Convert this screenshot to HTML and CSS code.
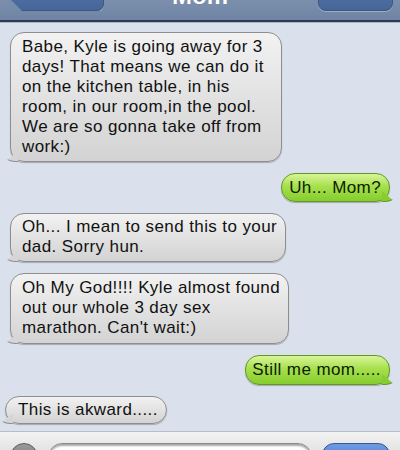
FILE: index.html
```html
<!DOCTYPE html>
<html>
<head>
<meta charset="utf-8">
<link rel="stylesheet" href="styles.css">
</head>
<body>
<div class="screen">
  <header class="topbar">
    <div class="btn back">Messages</div>
    <div class="title">Mom</div>
    <div class="btn edit">Edit</div>
  </header>
  <main class="chat">
    <div class="bubble in b1">Babe, Kyle is going away for 3<br>days! That means we can do it<br>on the kitchen table, in his<br>room, in our room,in the pool.<br>We are so gonna take off from<br>work:)</div>
    <div class="bubble out b2">Uh... Mom?</div>
    <div class="bubble in b3">Oh... I mean to send this to your<br>dad. Sorry hun.</div>
    <div class="bubble in b4">Oh My God!!!! Kyle almost found<br>out our whole 3 day sex<br>marathon. Can't wait:)</div>
    <div class="bubble out b5">Still me mom.....</div>
    <div class="bubble in b6">This is akward.....</div>
  </main>
  <footer class="bottombar">
    <div class="cam"></div>
    <div class="input"></div>
    <div class="send">Send</div>
  </footer>
</div>
</body>
</html>
```
FILE: styles.css
```css
* { box-sizing: border-box; }
html, body { margin: 0; padding: 0; }
body {
  width: 400px;
  height: 450px;
  overflow: hidden;
  background: #dbe1ec;
  font-family: "Liberation Sans", Arial, sans-serif;
}
.screen {
  width: 400px;
  height: 450px;
  display: flex;
  flex-direction: column;
  overflow: hidden;
}
.topbar {
  height: 22px;
  flex: none;
  display: flex;
  align-items: flex-end;
  justify-content: space-between;
  padding: 0 7px 9px 10px;
  background: linear-gradient(#7b8fad, #6f84a4);
  border-bottom: 2px solid #2d3a4e;
  box-shadow: 0 1px 0 #aab6c8;
  overflow: hidden;
  position: relative;
}
.btn {
  height: 30px;
  background: linear-gradient(#5576a8, #46669a);
  border: 1px solid #3e5580;
  border-radius: 0 0 8px 8px;
  color: #fff;
  font-weight: bold;
  font-size: 13px;
  display: flex;
  align-items: flex-end;
  justify-content: center;
  padding-bottom: 10px;
  box-shadow: 0 1px 0 rgba(255,255,255,0.3);
}
.back {
  width: 94px;
  clip-path: polygon(0 0, 100% 0, 100% 100%, 12px 100%, 0 60%);
  border-radius: 0 0 7px 0;
  padding-bottom: 2px;
  line-height: 10px;
  color: transparent;
}
.edit { width: 75px; color: transparent; }
.title {
  position: absolute;
  left: 0; right: 0;
  bottom: 13px;
  text-align: center;
  color: #fff;
  font-weight: bold;
  font-size: 24px;
  line-height: 22px;
  text-shadow: 0 -1px 0 #4a5a74;
}
.chat {
  flex: 1;
  display: flex;
  flex-direction: column;
  align-items: flex-start;
  padding: 10px 10px 0 10px;
  gap: 11px;
}
.bubble {
  position: relative;
  font-size: 17px;
  letter-spacing: 0.4px;
  line-height: 20px;
  color: #111;
  border-radius: 14px;
  padding: 3px 10px 4px 11px;
  box-shadow: 0 1px 1px rgba(0,0,0,0.25);
  white-space: nowrap;
}
.in {
  background: linear-gradient(#f2f2f2 0%, #e2e2e2 50%, #d3d3d3 100%);
  border: 1px solid #8e8e8e;
}
.in::after {
  content: "";
  position: absolute;
  left: -6px;
  bottom: -1px;
  width: 12px;
  height: 10px;
  background: #d5d5d5;
  border-left: 1px solid #8e8e8e;
  border-bottom: 1px solid #8e8e8e;
  border-bottom-left-radius: 10px 6px;
  clip-path: polygon(0 100%, 100% 0, 100% 100%);
}
.out {
  align-self: flex-end;
  color: #0c2200;
  background: linear-gradient(#d8f598 0%, #a7e04e 45%, #86cc2f 100%);
  border: 1px solid #5f9a24;
}
.out::after {
  content: "";
  position: absolute;
  right: -6px;
  bottom: -1px;
  width: 12px;
  height: 10px;
  background: #88cd30;
  border-right: 1px solid #5f9a24;
  border-bottom: 1px solid #5f9a24;
  border-bottom-right-radius: 10px 6px;
  clip-path: polygon(0 0, 100% 100%, 0 100%);
}
.b1 { width: 272px; padding-top: 4px; padding-bottom: 4px; }
.b2 { padding: 4px 8px 3px 7px; }
.b3 { width: 276px; }
.b4 { width: 279px; padding-top: 4px; padding-bottom: 5px; }
.b5 { padding: 4px 8px 4px 6px; }
.b6 { margin-left: -5px; padding: 3px 8px 3px 12px; }
.bottombar {
  height: 19px;
  flex: none;
  margin-top: auto;
  border-top: 1px solid #b9bec6;
  background: linear-gradient(#f2f2f2, #e4e4e4);
  display: flex;
  align-items: flex-start;
  padding: 11px 10px 0 10px;
  gap: 10px;
  overflow: hidden;
}
.cam {
  width: 28px;
  height: 28px;
  flex: none;
  border-radius: 50%;
  background: linear-gradient(#9a9a9a, #6e6e6e);
  border: 1px solid #5c5c5c;
}
.input {
  width: 264px;
  height: 28px;
  flex: none;
  border-radius: 14px;
  background: #fff;
  border: 1px solid #8a8a8a;
  box-shadow: inset 0 2px 2px rgba(0,0,0,0.35);
}
.send {
  width: 68px;
  height: 28px;
  flex: none;
  border-radius: 12px;
  background: linear-gradient(#6f9be0, #3f71c4);
  border: 1px solid #34569a;
  color: transparent;
}
```
